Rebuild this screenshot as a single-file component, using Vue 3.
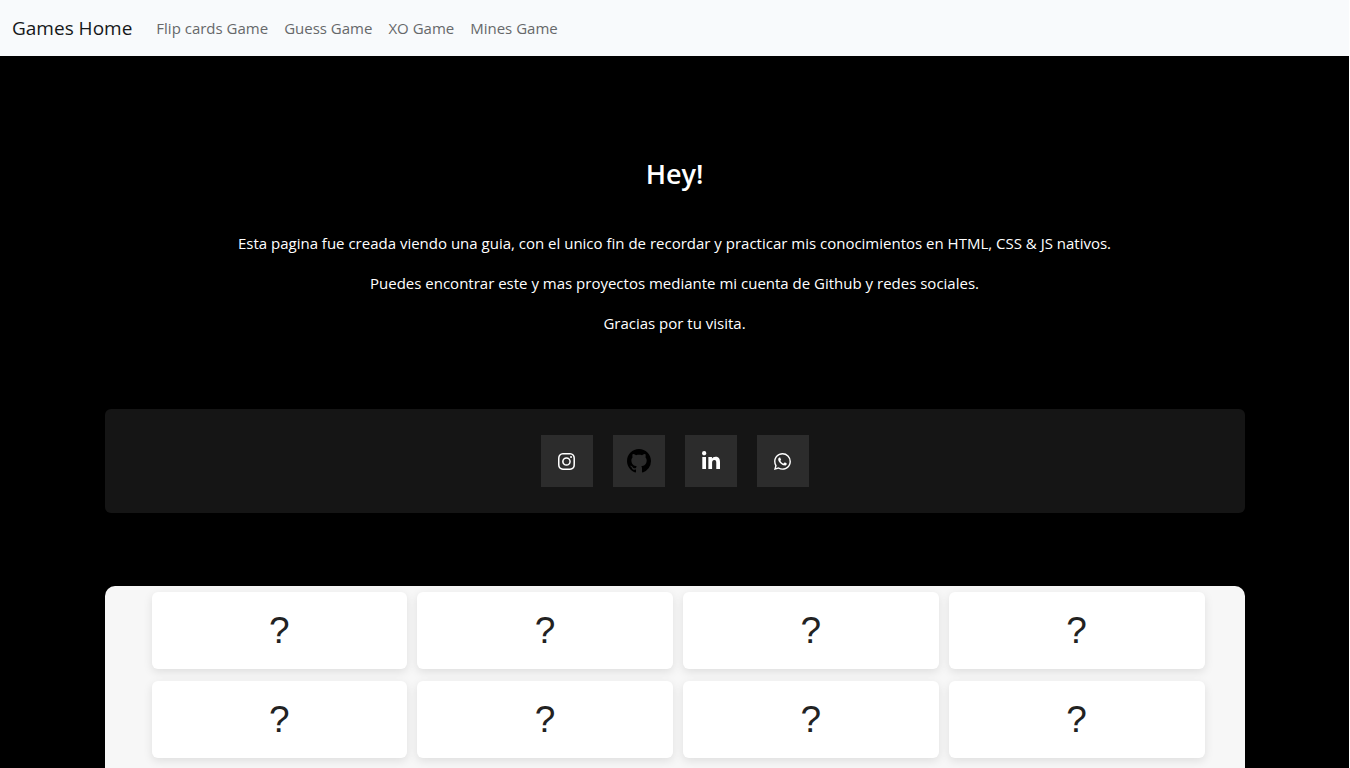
<script setup>
const links = ['Flip cards Game', 'Guess Game', 'XO Game', 'Mines Game']
const socials = [
  {
    name: 'Instagram',
    size: 17,
    tone: 'light',
    box: '0 0 16 16',
    path: 'M8 0C5.829 0 5.556.01 4.703.048 3.85.088 3.269.222 2.76.42a3.9 3.9 0 0 0-1.417.923A3.9 3.9 0 0 0 .42 2.76C.222 3.268.087 3.85.048 4.7.01 5.555 0 5.827 0 8.001c0 2.172.01 2.444.048 3.297.04.852.174 1.433.372 1.942.205.526.478.972.923 1.417.444.445.89.719 1.416.923.51.198 1.09.333 1.942.372C5.555 15.99 5.827 16 8 16s2.444-.01 3.298-.048c.851-.04 1.434-.174 1.943-.372a3.9 3.9 0 0 0 1.416-.923c.445-.445.718-.891.923-1.417.197-.509.332-1.09.372-1.942C15.99 10.445 16 10.173 16 8s-.01-2.445-.048-3.299c-.04-.851-.175-1.433-.372-1.941a3.9 3.9 0 0 0-.923-1.417A3.9 3.9 0 0 0 13.24.42c-.51-.198-1.092-.333-1.943-.372C10.443.01 10.172 0 7.998 0zm-.717 1.442h.718c2.136 0 2.389.007 3.232.046.78.035 1.204.166 1.486.275.373.145.64.319.92.599s.453.546.598.92c.11.281.24.705.275 1.485.039.843.047 1.096.047 3.231s-.008 2.389-.047 3.232c-.035.78-.166 1.203-.275 1.485a2.5 2.5 0 0 1-.599.919c-.28.28-.546.453-.92.598-.28.11-.704.24-1.485.276-.843.038-1.096.047-3.232.047s-2.39-.009-3.233-.047c-.78-.036-1.203-.166-1.485-.276a2.5 2.5 0 0 1-.92-.598 2.5 2.5 0 0 1-.6-.92c-.109-.281-.24-.705-.275-1.485-.038-.843-.046-1.096-.046-3.233s.008-2.388.046-3.231c.036-.78.166-1.204.276-1.486.145-.373.319-.64.599-.92s.546-.453.92-.598c.282-.11.705-.24 1.485-.276.738-.034 1.024-.044 2.515-.045zm4.988 1.328a.96.96 0 1 0 0 1.92.96.96 0 0 0 0-1.92m-4.27 1.122a4.109 4.109 0 1 0 0 8.217 4.109 4.109 0 0 0 0-8.217m0 1.441a2.667 2.667 0 1 1 0 5.334 2.667 2.667 0 0 1 0-5.334'
  },
  {
    name: 'Github',
    size: 24,
    tone: 'dark',
    box: '0 0 16 16',
    path: 'M8 0C3.58 0 0 3.58 0 8c0 3.54 2.29 6.53 5.47 7.59.4.07.55-.17.55-.38 0-.19-.01-.82-.01-1.49-2.01.37-2.53-.49-2.69-.94-.09-.23-.48-.94-.82-1.13-.28-.15-.68-.52-.01-.53.63-.01 1.08.58 1.23.82.72 1.21 1.87.87 2.33.66.07-.52.28-.87.51-1.07-1.78-.2-3.64-.89-3.64-3.95 0-.87.31-1.59.82-2.15-.08-.2-.36-1.02.08-2.12 0 0 .67-.21 2.2.82.64-.18 1.32-.27 2-.27s1.36.09 2 .27c1.53-1.04 2.2-.82 2.2-.82.44 1.1.16 1.92.08 2.12.51.56.82 1.27.82 2.15 0 3.07-1.87 3.75-3.65 3.95.29.25.54.73.54 1.48 0 1.07-.01 1.93-.01 2.2 0 .21.15.46.55.38A8.01 8.01 0 0 0 16 8c0-4.42-3.58-8-8-8'
  },
  {
    name: 'LinkedIn',
    size: 18,
    tone: 'light',
    lift: true,
    box: '0 0 448 448',
    path: 'M100.3 448H7.4V148.9h92.9zM53.8 108.1C24.1 108.1 0 83.5 0 53.8a53.8 53.8 0 0 1 107.6 0c0 29.7-24.1 54.3-53.8 54.3zM447.9 448h-92.7V302.4c0-34.7-.7-79.2-48.3-79.2-48.3 0-55.7 37.7-55.7 76.7V448h-92.8V148.9h89.1v40.8h1.3c12.4-23.5 42.7-48.3 87.9-48.3 94 0 111.3 61.9 111.3 142.3V448z'
  },
  {
    name: 'WhatsApp',
    size: 17,
    tone: 'light',
    box: '0 0 16 16',
    path: 'M13.601 2.326A7.85 7.85 0 0 0 7.994 0C3.627 0 .068 3.558.064 7.926c0 1.399.366 2.76 1.057 3.965L0 16l4.204-1.102a7.9 7.9 0 0 0 3.79.965h.004c4.368 0 7.926-3.558 7.93-7.93A7.9 7.9 0 0 0 13.6 2.326zM7.994 14.521a6.6 6.6 0 0 1-3.356-.92l-.24-.144-2.494.654.666-2.433-.156-.251a6.56 6.56 0 0 1-1.007-3.505c0-3.626 2.957-6.584 6.591-6.584a6.56 6.56 0 0 1 4.66 1.931 6.56 6.56 0 0 1 1.928 4.66c-.004 3.639-2.961 6.592-6.592 6.592m3.615-4.934c-.197-.099-1.17-.578-1.353-.646-.182-.065-.315-.099-.445.099-.133.197-.513.646-.627.775-.114.133-.232.148-.43.05-.197-.1-.836-.308-1.592-.985-.59-.525-.985-1.175-1.103-1.372-.114-.198-.011-.304.088-.403.087-.088.197-.232.296-.346.1-.114.133-.198.198-.33.065-.134.034-.248-.015-.347-.05-.099-.445-1.076-.612-1.47-.16-.389-.323-.335-.445-.34-.114-.007-.247-.007-.38-.007a.73.73 0 0 0-.529.247c-.182.198-.691.677-.691 1.654s.71 1.916.81 2.049c.098.133 1.394 2.132 3.383 2.992.47.205.84.326 1.129.418.475.152.904.129 1.246.08.38-.058 1.171-.48 1.338-.943.164-.464.164-.86.114-.943-.049-.084-.182-.133-.38-.232'
  }
]
const cards = 8
</script>

<template>
  <div class="page">
    <nav class="navbar">
      <a class="brand" href="#">Games Home</a>
      <a v-for="link in links" :key="link" class="nav-link" href="#">{{ link }}</a>
    </nav>
    <main class="container">
      <section class="intro">
        <h1>Hey!</h1>
        <p>Esta pagina fue creada viendo una guia, con el unico fin de recordar y practicar mis conocimientos en HTML, CSS &amp; JS nativos.</p>
        <p>Puedes encontrar este y mas proyectos mediante mi cuenta de Github y redes sociales.</p>
        <p>Gracias por tu visita.</p>
      </section>
      <section class="socials">
        <a v-for="s in socials" :key="s.name" class="social" :class="[s.tone, { lift: s.lift }]" href="#" :aria-label="s.name">
          <svg :width="s.size" :height="s.size" :viewBox="s.box" aria-hidden="true"><path :d="s.path" /></svg>
        </a>
      </section>
      <section class="board">
        <button v-for="n in cards" :key="n" class="card" type="button">?</button>
      </section>
    </main>
  </div>
</template>

<style>
body {
  margin: 0;
  background: #fff;
}
</style>

<style scoped>
.page {
  display: flex;
  flex-direction: column;
  box-sizing: border-box;
  min-height: 100vh;
  margin-right: 1px;
  background: #000;
  color: #fff;
  font-family: "Segoe UI", "Open Sans", "Noto Sans", sans-serif;
  font-size: 15px;
  line-height: 24px;
}
.navbar {
  display: flex;
  align-items: center;
  box-sizing: border-box;
  min-height: 56px;
  padding: 0 12px;
  gap: 16px;
  background: #f8fafc;
}
.navbar a {
  text-decoration: none;
}
.brand {
  margin-right: 8px;
  color: #151719;
  font-size: 19px;
}
.nav-link {
  color: #66686a;
}
.container {
  display: flex;
  flex: 1;
  flex-direction: column;
  width: 100%;
  max-width: 1140px;
  margin: 0 auto;
}
.intro {
  padding: 102px 0 74px;
  text-align: center;
}
h1 {
  margin: 0 0 41px;
  font-size: 27px;
  line-height: 32px;
  font-weight: 600;
}
p {
  margin: 0 0 16px;
}
p:last-child {
  margin: 0;
}
.socials {
  display: flex;
  justify-content: center;
  gap: 20px;
  padding: 26px;
  background: #151515;
  border-radius: 6px;
}
.social {
  display: flex;
  align-items: center;
  justify-content: center;
  width: 52px;
  height: 52px;
  background: #2c2c2c;
}
.social svg {
  display: block;
}
.light {
  fill: #fff;
}
.dark {
  fill: #000;
}
.lift {
  box-sizing: border-box;
  padding-bottom: 2px;
}
.board {
  display: grid;
  flex: 1;
  grid-template-columns: repeat(4, 1fr);
  align-content: start;
  gap: 12px 10px;
  margin-top: 73px;
  padding: 6px 40px 6px 47px;
  background: #f7f7f7;
  border-radius: 10px 10px 0 0;
}
.card {
  height: 77px;
  padding: 0;
  border: 0;
  border-radius: 6px;
  background: #fff;
  box-shadow: 0 3px 10px rgba(0, 0, 0, 0.1);
  color: #222;
  font-family: "Liberation Sans", Arial, sans-serif;
  font-size: 37px;
}
</style>
